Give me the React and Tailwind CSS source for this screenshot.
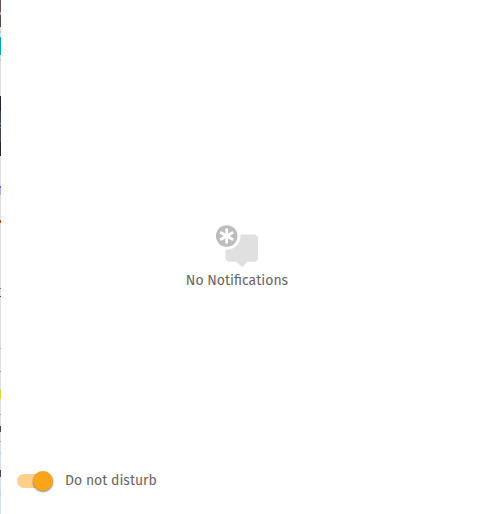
import { useState } from "react";

// Sliver of the page that shows past the panel's left edge: [height, colour]
const SLIVER = [
  [12, "#5f5250"], [3, "#b3aba9"], [12, "#5d4a45"], [4, "#e0dfdf"], [2, "#8ed0d4"],
  [4, "#e0dfdf"], [18, "#00a8b3"], [4, "#e0dfdf"], [2, "#9fd6d9"], [35, "#e0dfdf"],
  [15, "#20242b"], [12, "#3d444e"], [1, "#7c828a"], [3, "#3d444e"], [1, "#7c828a"],
  [14, "#3d444e"], [14, "#23252a"], [30, "#e0dfe0"], [2, "#5560d0"], [7, "#a9aee0"],
  [25, "#e0dfe0"], [3, "#d9450b"], [65, "#e0dfe0"], [1, "#777777"], [7, "#e0dfe0"],
  [1, "#444444"], [51, "#e0dfe0"], [1, "#b5b5b8"], [22, "#e0dfe0"], [1, "#999999"],
  [18, "#e0dfe0"], [9, "#d9d835"], [15, "#e0dfe0"], [1, "#a5a5a5"], [11, "#e0dfe0"],
  [6, "#47474c"], [9, "#e0dfe0"], [1, "#a5a5a5"], [10, "#e0dfe0"], [1, "#9cc4ee"],
  [17, "#d3dce8"], [7, "#4a4d55"], [17, "#d3dce8"], [1, "#a4c8ee"], [20, "#d3dce8"],
];

function PageSliver() {
  return (
    <div aria-hidden="true" className="flex w-px shrink-0 flex-col bg-[#dddddd]">
      {SLIVER.map(([height, color], i) => (
        <span key={i} className="block shrink-0" style={{ height, backgroundColor: color }} />
      ))}
    </div>
  );
}

function NotificationIcon() {
  return (
    <svg width="42" height="42" viewBox="0 0 42 42" aria-hidden="true">
      <path
        d="M14 9.5h24a4.3 4.3 0 0 1 4.3 4.3v18.6a4.3 4.3 0 0 1-4.3 4.3h-6.5L26 42.2l-5.5-5.5h-6.7a4.3 4.3 0 0 1-4.3-4.3V13.8a4.3 4.3 0 0 1 4.5-4.3z"
        fill="#e0e0e0"
      />
      <circle cx="10.7" cy="11" r="13.8" fill="#ffffff" />
      <circle cx="10.7" cy="11" r="10.8" fill="#bdbdbd" />
      <g stroke="#ffffff" strokeWidth="2.7">
        <path d="M10.7 3.5v15" />
        <path d="M4.2 7.25l13 7.5" />
        <path d="M4.2 14.75l13-7.5" />
      </g>
    </svg>
  );
}

export default function App() {
  const [quiet, setQuiet] = useState(true);
  return (
    <div className="flex min-h-screen bg-white font-['Fira_Sans','Noto_Sans',sans-serif] text-sm text-[#6b6561]">
      <PageSliver />
      <main className="flex grow flex-col pr-1">
        <div className="flex grow flex-col items-center justify-center gap-1 pt-16">
          <NotificationIcon />
          <p>No Notifications</p>
        </div>
        <label className="flex cursor-pointer items-center gap-3 px-4 pt-5 pb-6">
          <span className="relative flex h-5 w-9 items-center">
            <input
              type="checkbox"
              role="switch"
              checked={quiet}
              onChange={(e) => setQuiet(e.target.checked)}
              className="peer h-3.5 w-full cursor-pointer appearance-none rounded-full bg-[#bdbdbd] checked:bg-[#fdd08b]"
            />
            <span className="pointer-events-none absolute left-0 size-5 rounded-full bg-white shadow-[0_1px_2px_rgba(0,0,0,0.5)] peer-checked:left-4 peer-checked:bg-[#faa41a]" />
          </span>
          <span>Do not disturb</span>
        </label>
      </main>
    </div>
  );
}
